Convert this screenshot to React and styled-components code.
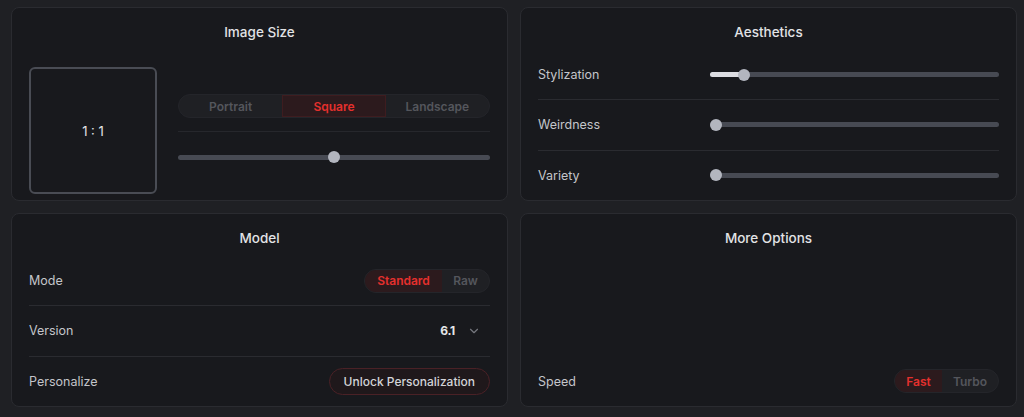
import React from 'react';
import styled, { createGlobalStyle } from 'styled-components';
import { ChevronDown } from 'lucide-react';

const GlobalStyle = createGlobalStyle`
  * { box-sizing: border-box; }
  html, body {
    margin: 0;
    padding: 0;
    background: #1f2024;
    font-family: 'Inter', 'Liberation Sans', sans-serif;
    -webkit-font-smoothing: antialiased;
  }
`;

const Page = styled.div`
  width: 1024px;
  height: 417px;
  padding: 7px 6px 10px 11px;
  display: grid;
  grid-template-columns: 497px 497px;
  grid-template-rows: 194px 194px;
  gap: 12px;
`;

const Panel = styled.section`
  background: #18191d;
  border: 1px solid #2a2b30;
  border-radius: 8px;
  display: flex;
  flex-direction: column;
  padding: 0 17px;
  overflow: hidden;
`;

const PanelTitle = styled.h2`
  margin: 0;
  height: 42px;
  padding-top: 15px;
  font-size: 13.5px;
  line-height: 18px;
  font-weight: 500;
  color: #e2e3e6;
  text-align: center;
`;

const Rows = styled.div`
  flex: 1;
  display: flex;
  flex-direction: column;
`;

const Row = styled.div`
  flex: 1;
  display: flex;
  align-items: center;
  justify-content: space-between;
  border-top: ${(p) => (p.first ? 'none' : '1px solid #2a2b30')};
`;

const Spacer = styled.div`
  flex: 1;
`;

const Label = styled.span`
  font-size: 12.5px;
  color: #c4c5ca;
`;

const SliderWrap = styled.div`
  width: ${(p) => p.width || '100%'};
  height: 14px;
  position: relative;
  display: flex;
  align-items: center;
`;

const Track = styled.div`
  width: 100%;
  height: 5px;
  border-radius: 3px;
  background: #474a53;
  position: relative;
`;

const Fill = styled.div`
  position: absolute;
  left: 0;
  top: 0;
  height: 100%;
  border-radius: 3px;
  background: #dcdde2;
`;

const Thumb = styled.div`
  position: absolute;
  top: 50%;
  width: 12px;
  height: 12px;
  margin: -6px 0 0 -6px;
  border-radius: 50%;
  background: #b3b6bf;
`;

const Slider = ({ value, fill, width }) => (
  <SliderWrap width={width}>
    <Track>
      {fill && <Fill style={{ width: `calc(6px + ${value}% - ${value * 0.12}px)` }} />}
      <Thumb style={{ left: `calc(6px + ${value}% - ${value * 0.12}px)` }} />
    </Track>
  </SliderWrap>
);

const Segmented = styled.div`
  display: flex;
  height: 24px;
  border-radius: 12px;
  background: #1f2024;
  border: 1px solid #24252a;
  overflow: hidden;
`;

const Segment = styled.div`
  flex: ${(p) => (p.grow ? 1 : 'none')};
  width: ${(p) => p.w || 'auto'};
  display: flex;
  align-items: center;
  justify-content: center;
  font-size: 12px;
  font-weight: 600;
  color: ${(p) => (p.active ? '#e5302d' : '#54565c')};
  background: ${(p) => (p.active ? '#2c1a1d' : 'transparent')};
  box-shadow: ${(p) => (p.active && p.boxed ? 'inset 0 0 0 1px #3e1c1f' : 'none')};
`;

const SizeBody = styled.div`
  flex: 1;
  display: flex;
  align-items: flex-start;
  gap: 21px;
`;

const Preview = styled.div`
  width: 128px;
  height: 127px;
  margin-top: 17px;
  border: 2px solid #494c54;
  border-radius: 6px;
  display: flex;
  align-items: center;
  justify-content: center;
  font-size: 13px;
  color: #e4e5e8;
`;

const SizeControls = styled.div`
  flex: 1;
  display: flex;
  flex-direction: column;
  padding-top: 44px;
`;

const Divider = styled.div`
  height: 1px;
  background: #26272c;
  margin: 13px 0 18px;
`;

const AestheticLabel = styled(Label)`
  width: 172px;
`;

const Version = styled.div`
  display: flex;
  align-items: center;
  gap: 12px;
  padding-right: 9px;
  font-size: 12px;
  font-weight: 700;
  color: #e6e7ea;
  letter-spacing: -0.3px;
  svg { color: #75777e; }
`;

const UnlockButton = styled.button`
  height: 27px;
  padding: 0 14px;
  border-radius: 14px;
  background: #1f181b;
  border: 1px solid #4a2126;
  color: #d3d4d8;
  font-family: inherit;
  font-size: 12px;
  font-weight: 500;
`;

const LastRow = styled(Row)`
  flex: none;
  height: 50px;
`;

export default function App() {
  return (
    <>
      <GlobalStyle />
      <Page>
        <Panel>
          <PanelTitle>Image Size</PanelTitle>
          <SizeBody>
            <Preview>1 : 1</Preview>
            <SizeControls>
              <Segmented>
                <Segment grow>Portrait</Segment>
                <Segment grow active boxed>Square</Segment>
                <Segment grow>Landscape</Segment>
              </Segmented>
              <Divider />
              <Slider value={50} />
            </SizeControls>
          </SizeBody>
        </Panel>

        <Panel>
          <PanelTitle>Aesthetics</PanelTitle>
          <Rows>
            <Row first>
              <AestheticLabel>Stylization</AestheticLabel>
              <Slider value={10} fill width="289px" />
            </Row>
            <Row>
              <AestheticLabel>Weirdness</AestheticLabel>
              <Slider value={0} width="289px" />
            </Row>
            <Row>
              <AestheticLabel>Variety</AestheticLabel>
              <Slider value={0} width="289px" />
            </Row>
          </Rows>
        </Panel>

        <Panel>
          <PanelTitle>Model</PanelTitle>
          <Rows>
            <Row first>
              <Label>Mode</Label>
              <Segmented>
                <Segment w="77px" active>Standard</Segment>
                <Segment w="47px">Raw</Segment>
              </Segmented>
            </Row>
            <Row>
              <Label>Version</Label>
              <Version>
                6.1
                <ChevronDown size={14} strokeWidth={2} />
              </Version>
            </Row>
            <Row>
              <Label>Personalize</Label>
              <UnlockButton>Unlock Personalization</UnlockButton>
            </Row>
          </Rows>
        </Panel>

        <Panel>
          <PanelTitle>More Options</PanelTitle>
          <Spacer />
          <LastRow first>
            <Label>Speed</Label>
            <Segmented>
              <Segment w="47px" active>Fast</Segment>
              <Segment w="56px">Turbo</Segment>
            </Segmented>
          </LastRow>
        </Panel>
      </Page>
    </>
  );
}
